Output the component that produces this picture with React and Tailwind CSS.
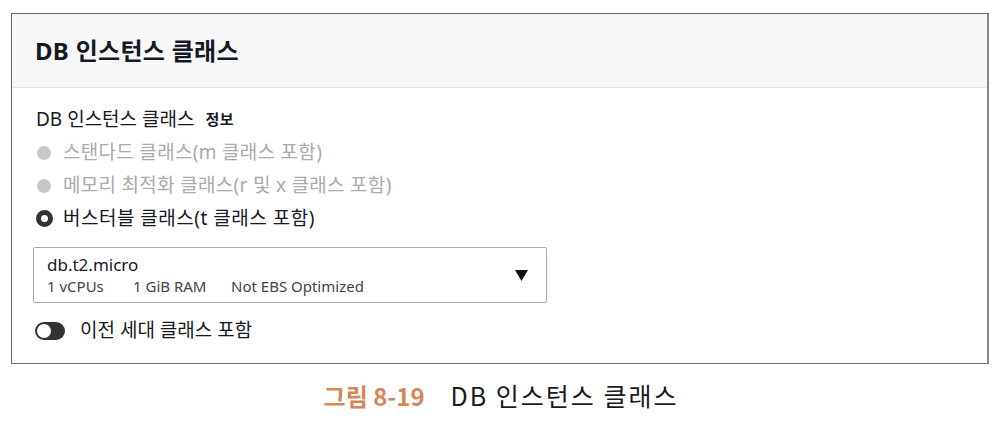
export default function App() {
  const font = { fontFamily: '"Noto Sans", "Noto Sans CJK KR", sans-serif' };
  return (
    <div className="w-[1002px] h-[428px] bg-white relative" style={font}>
      <div className="pt-[13px] pl-[11px]">
        <div className="w-[978px] h-[351px] border border-[#666] border-r-2 border-r-[#888] flex flex-col">
          <div className="h-[74px] bg-[#f7f7f7] border-b border-[#e6e6e6] flex items-center px-[23px]">
            <span className="text-[24px] font-bold text-[#16191f] tracking-[0.3px]">DB 인스턴스 클래스</span>
          </div>
          <div className="flex flex-col px-[23px] pt-[15px]">
            <div className="h-[33px] flex items-center text-[19px] text-[#16191f] ml-[1px]">
              <span>DB 인스턴스 클래스</span>
              <span className="ml-[11px] text-[15px] font-bold tracking-[0.5px]">정보</span>
            </div>
            <div className="h-[33px] flex items-center text-[19px] text-[#aaaaaa] tracking-[0.3px]">
              <span className="w-[18px] flex justify-center shrink-0"><span className="w-[14px] h-[14px] rounded-full bg-[#c8c8c8]" /></span>
              <span className="ml-[10px]">스탠다드 클래스(m 클래스 포함)</span>
            </div>
            <div className="h-[33px] flex items-center text-[19px] text-[#aaaaaa] tracking-[0.3px]">
              <span className="w-[18px] flex justify-center shrink-0"><span className="w-[14px] h-[14px] rounded-full bg-[#c8c8c8]" /></span>
              <span className="ml-[10px]">메모리 최적화 클래스(r 및 x 클래스 포함)</span>
            </div>
            <div className="h-[33px] flex items-center text-[19px] text-[#16191f] tracking-[0.5px]">
              <span className="w-[18px] flex justify-center shrink-0"><span className="w-[17px] h-[17px] rounded-full border-[5px] border-[#333] bg-white" /></span>
              <span className="ml-[10px]">버스터블 클래스(t 클래스 포함)</span>
            </div>
            <div className="mt-[12px] ml-[-2px] w-[514px] h-[56px] border border-[#aaa] rounded-[2px] flex items-center justify-between pl-[13px] pr-[18px]">
              <div className="flex flex-col">
                <span className="text-[17px] text-[#16191f] leading-[22px]">db.t2.micro</span>
                <div className="flex text-[15px] text-[#444] leading-[20px]">
                  <span className="w-[86px]">1 vCPUs</span>
                  <span className="w-[98px]">1 GiB RAM</span>
                  <span>Not EBS Optimized</span>
                </div>
              </div>
              <svg width="13" height="11" viewBox="0 0 13 11">
                <path d="M0 0 H13 L6.5 11 Z" fill="#111" />
              </svg>
            </div>
            <div className="mt-[11px] h-[33px] flex items-center text-[19px] text-[#16191f]">
              <span className="w-[30px] h-[18px] rounded-full bg-[#333] flex items-center pl-[2px] shrink-0">
                <span className="w-[14px] h-[14px] rounded-full bg-white" />
              </span>
              <span className="ml-[15px]">이전 세대 클래스 포함</span>
            </div>
          </div>
        </div>
      </div>
      <div className="h-[64px] flex items-center justify-center" style={{ fontFamily: '"Noto Sans CJK KR", sans-serif' }}>
        <span className="font-bold text-[24px] text-[#d4885a]">그림 8-19</span>
        <span className="ml-[26px] text-[25px] tracking-[2px] text-[#1a1a1a]">DB 인스턴스 클래스</span>
      </div>
    </div>
  );
}
